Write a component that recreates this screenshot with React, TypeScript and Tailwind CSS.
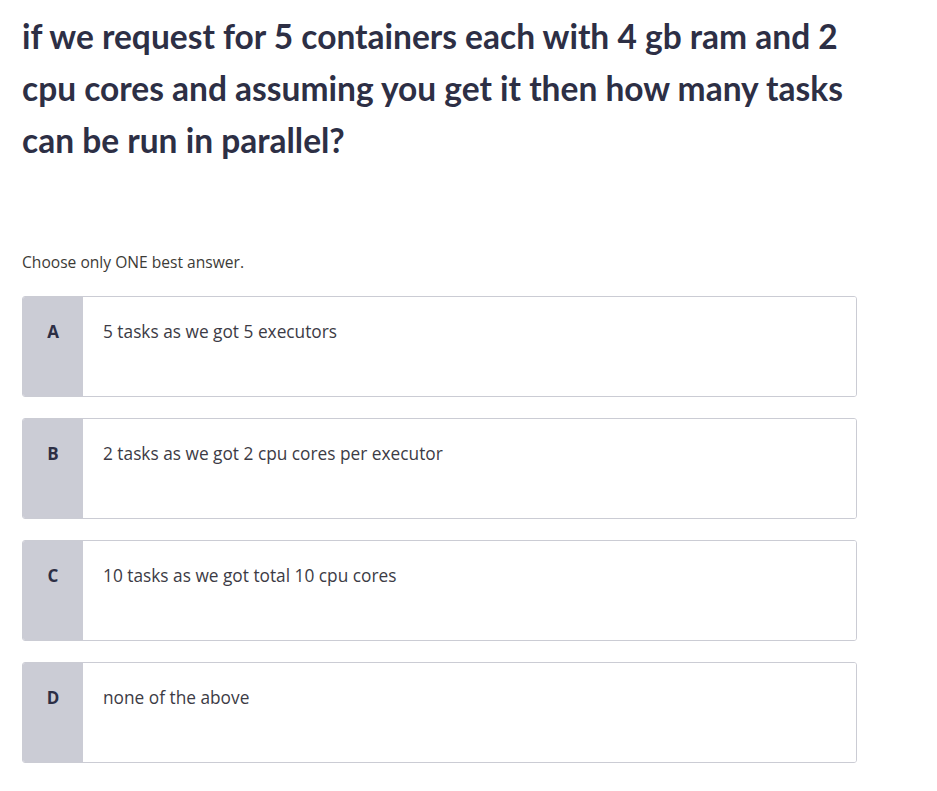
import React from "react";

const answers = [
  { key: "A", text: "5 tasks as we got 5 executors" },
  { key: "B", text: "2 tasks as we got 2 cpu cores per executor" },
  { key: "C", text: "10 tasks as we got total 10 cpu cores" },
  { key: "D", text: "none of the above" },
];

const App = () => {
  return (
    <div className="min-h-screen bg-white px-[22px] pt-[10px] text-[#2d2f3f]" style={{ fontFamily: "'Open Sans', sans-serif" }}>
      <h1 className="w-[870px] font-['Lato',sans-serif] text-[33.5px] font-bold leading-[52px] text-[#2d2f45]">
        if we request for 5 containers each with 4 gb ram and 2 cpu cores and assuming you get it then how many tasks can be run in parallel?
      </h1>

      <p className="mt-[85px] text-[15.6px] leading-[22px] text-[#3c3b37]">Choose only ONE best answer.</p>

      <div className="mt-[23px] flex w-[835px] flex-col gap-[21px]">
        {answers.map((a) => (
          <div key={a.key} className="flex h-[101px] overflow-hidden rounded-[3px] border border-[#cbccd4]">
            <div className="flex w-[60px] justify-center bg-[#cbccd5] pt-[23px] text-[17px] font-bold leading-[24px] text-[#2d2f45]">
              {a.key}
            </div>
            <div className="flex-1 bg-white pl-[20px] pt-[23px] text-[17.3px] leading-[24px] text-[#3c3b45]">{a.text}</div>
          </div>
        ))}
      </div>
    </div>
  );
};

export default App;
